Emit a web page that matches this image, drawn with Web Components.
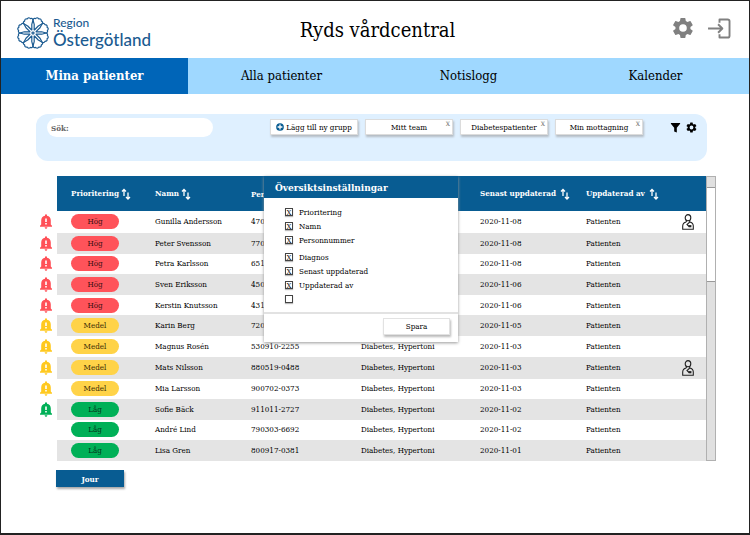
<!DOCTYPE html>
<html lang="sv">
<head>
<meta charset="utf-8">
<title>Ryds vårdcentral</title>
<style>
  html, body { margin: 0; min-height: 100%; }
  body {
    font-family: "DejaVu Serif Condensed", "DejaVu Serif", serif;
    font-size: 8px;
    color: #000;
    background: #fff;
    --blue: #085c92;
  }
</style>
</head>
<body>
<care-app></care-app>

<script>
const define = (name, html, setup) => {
  const template = document.createElement('template');
  template.innerHTML = html;
  customElements.define(name, class extends HTMLElement {
    constructor() {
      super();
      this.attachShadow({ mode: 'open' }).append(template.content.cloneNode(true));
    }
    connectedCallback() { if (setup) setup(this, this.shadowRoot); }
  });
};

/* Icons, sized by the host's width and height */
const GEAR = '<path fill="currentColor" fill-rule="evenodd" d="M19.4 13a7.5 7.5 0 0 0 0-2l2.1-1.6a.5.5 0 0 0 .1-.7l-2-3.4a.5.5 0 0 0-.6-.2l-2.5 1a7.3 7.3 0 0 0-1.7-1l-.4-2.6a.5.5 0 0 0-.5-.5h-4a.5.5 0 0 0-.5.5L9 5.100a7.300 7.300 0 0 0-1.700 1l-2.500-1a.5.5 0 0 0-.6.2l-2 3.400a.5.5 0 0 0 .1.700L4.500 11a7.500 7.500 0 0 0 0 2l-2.200 1.600a.5.5 0 0 0-.1.700l2 3.400c.1.200.4.300.6.200l2.500-1c.5.400 1.100.7 1.700 1l.4 2.600c0 .3.200.5.500.5h4c.300 0 .5-.2.500-.5l.4-2.600a7.300 7.300 0 0 0 1.700-1l2.500 1c.2.100.5 0 .6-.2l2-3.400a.5.5 0 0 0-.1-.7zM12 15.800a3.800 3.800 0 1 1 0-7.600 3.800 3.800 0 0 1 0 7.600z"/>';
const ICONS = {
  gear: ['1 1 22 22', GEAR],
  exit: ['0 0 24 22', '<g fill="none" stroke="currentColor" stroke-width="2" stroke-linejoin="round"><path d="M12 5V1.500h8.500q2 0 2 2v15q0 2-2 2H12V17"/><path d="M0 11h15M10.500 6.500L15 11l-4.500 4.500"/></g>'],
  filter: ['0 0 10 10', '<path fill="currentColor" d="M.8.800h8.400v.900L6.200 5.200V9.600L3.800 8.600V5.200L.8 1.700z"/>'],
  plus: ['0 0 10 10', '<circle cx="5" cy="5" r="4.800" fill="#085c92"/><path d="M5 2v6M2 5h6" stroke="#fff" stroke-width="1.600"/>'],
  sort: ['0 0 10 12', '<g fill="none" stroke="currentColor" stroke-width="1.300"><path d="M3 8V1.500M1 3.500l2-2 2 2"/><path d="M7 4.500V11M5 9l2 2 2-2"/></g>'],
  bell: ['0 0 12 15', '<path fill="currentColor" fill-rule="evenodd" d="M5 1.300a1 1 0 0 1 2 0v.5c2.400.5 3.800 2.200 3.800 4.700v4l1.200 1.300v.9H0v-.9l1.200-1.300v-4C1.200 4 2.600 2.300 5 1.800zM4.600 13.300h2.800q-.2 1.500-1.400 1.500t-1.400-1.500zM5.200 4.500v3.500h1.600V4.500zM5.200 9v1.500h1.600V9z"/>'],
  doctor: ['0 0 12 16', '<g fill="none" stroke="#222" stroke-width="1.100"><ellipse cx="6" cy="3.700" rx="2.800" ry="3.100"/><path d="M4.300 6.300V8M7.700 6.300V8M4.300 8Q.7 8.800.7 12v3.300h10.600V12q0-3.200-3.600-4L5 10.500l2 2"/></g><path fill="#222" d="M6.600 11.100h2.800v2.200H6.600z"/>']
};
customElements.define('app-icon', class extends HTMLElement {
  connectedCallback() {
    if (this.shadowRoot) return;
    const [box, art] = ICONS[this.getAttribute('name')];
    this.attachShadow({ mode: 'open' }).innerHTML = `
      <style>
        :host { display: inline-block; width: 10px; height: 10px; flex: none; }
        svg { display: block; width: 100%; height: 100%; }
      </style>
      <svg viewBox="${box}" aria-hidden="true">${art}</svg>`;
  }
});

const PETALS = Array.from({ length: 8 }, (_, i) =>
  `<g transform="rotate(${i * 45 + 22.5})"><path d="M0-3L-2.200-8.500L-5-12Q-5.200-14.300-3.200-14.200Q-1.900-16.800 0-15.200Q1.900-16.800 3.200-14.200Q5.200-14.300 5-12L2.200-8.500L0-3"/></g>`).join('');
define('region-logo', `
  <style>
    :host { display: flex; align-items: center; gap: 3px; color: #1b5b91; font-family: Lato, "Open Sans", sans-serif; font-weight: 500; }
    svg { width: 34px; height: 34px; }
    span { display: block; }
    .small { font-size: 12px; line-height: 15px; }
    .big { font-size: 17px; line-height: 20px; }
    .words { margin-top: -1px; }
  </style>
  <svg viewBox="-17 -17 34 34" aria-hidden="true"><g fill="none" stroke="currentColor" stroke-width="1.200" stroke-linejoin="round">${PETALS}<circle r="1"/></g></svg>
  <div class="words"><span class="small">Region</span><span class="big">Östergötland</span></div>`);

define('site-header', `
  <style>
    :host { display: grid; grid-template-columns: 1fr auto 1fr; align-items: center; height: 57px; padding: 0 18px 0 15px; }
    h1 { margin: 0; padding-left: 8px; font-size: 20px; font-weight: 400; line-height: 28px; }
    region-logo { padding-top: 7px; }
    .tools { display: flex; justify-content: flex-end; align-items: center; gap: 14px; color: #808080; }
    button { border: 0; padding: 0; background: none; color: inherit; display: block; }
    .gear { width: 22px; height: 22px; }
    .exit { width: 23px; height: 21px; }
  </style>
  <region-logo></region-logo>
  <h1><slot></slot></h1>
  <div class="tools">
    <button aria-label="Inställningar"><app-icon class="gear" name="gear"></app-icon></button>
    <button aria-label="Logga ut"><app-icon class="exit" name="exit"></app-icon></button>
  </div>`);

define('nav-tab', `
  <style>
    :host { display: block; flex: 1; background: #9fd8ff; font-size: 13px; }
    :host([active]) { background: #0065b8; color: #fff; font-weight: 700; }
    a { display: block; line-height: 36px; text-align: center; color: inherit; text-decoration: none; }
  </style>
  <a href="#"><slot></slot></a>`);

define('main-nav', `<style>:host { display: flex; }</style><slot></slot>`);

define('group-chip', `
  <style>
    :host { display: flex; position: relative; flex: 0 1 88px; height: 16px; background: #fff; border: 1px solid #dcdcdc; box-sizing: border-box; box-shadow: 1px 2px 2px #b4bcc4; }
    button { font: inherit; color: inherit; border: 0; padding: 0; background: none; }
    .main { flex: 1; display: flex; align-items: center; justify-content: center; gap: 2px; white-space: nowrap; }
    .close { position: absolute; top: 0; right: 2px; font: 6px/7px "DejaVu Serif", serif; color: #666; }
    :host([add]) .close { display: none; }
    app-icon { width: 8px; height: 8px; }
    :host(:not([add])) app-icon { display: none; }
  </style>
  <button class="main"><app-icon name="plus"></app-icon><slot></slot></button>
  <button class="close" aria-label="Ta bort">X</button>`);

define('filter-panel', `
  <style>
    :host { display: flex; align-items: flex-start; margin: 20px 42px 0 35px; padding: 4px 10px 4px 11px; height: 39px; border-radius: 12px; background: #dff0ff; }
    label { display: flex; flex: 0 1 166px; box-sizing: border-box; height: 19px; padding: 0 4px; border-radius: 10px; background: #fff; align-items: center; gap: 4px; color: #666; font-weight: 700; }
    input { flex: 1; min-width: 0; border: 0; outline: 0; background: none; font: inherit; }
    .groups { display: flex; flex: 0 1 373px; gap: 7px; margin-left: auto; padding-top: 1px; }
    .tools { display: flex; gap: 5px; margin-left: 27px; padding-top: 4px; }
    button { border: 0; padding: 0; background: none; color: #000; display: block; }
    app-icon { display: block; width: 11px; height: 11px; }
  </style>
  <label>Sök:<input type="search" aria-label="Sök"></label>
  <div class="groups"><slot></slot></div>
  <div class="tools">
    <button aria-label="Filter"><app-icon name="filter"></app-icon></button>
    <button aria-label="Kolumner"><app-icon name="gear"></app-icon></button>
  </div>`);

define('priority-pill', `
  <style>
    :host { display: block; width: 48px; line-height: 15px; border-radius: 8px; text-align: center; background: #ff535a; color: #3a0f10; }
    :host([level="medel"]) { background: #ffd348; color: #3a2c05; }
    :host([level="lag"]) { background: #00b057; color: #04351b; }
  </style>
  <slot></slot>`);

const H = 'Hög', M = 'Medel', L = 'Låg';
const PATIENTS = [
  [H, 'Gunilla Andersson', '470', '', '2020-11-08', 1, 1],
  [H, 'Peter Svensson', '770', '', '2020-11-08', 1, 0],
  [H, 'Petra Karlsson', '651', '', '2020-11-08', 1, 0],
  [H, 'Sven Eriksson', '450', '', '2020-11-06', 1, 0],
  [H, 'Kerstin Knutsson', '431', '', '2020-11-06', 1, 0],
  [M, 'Karin Berg', '720', '', '2020-11-05', 1, 0],
  [M, 'Magnus Rosén', '530910-2255', 'Diabetes, Hypertoni', '2020-11-03', 1, 0],
  [M, 'Mats Nilsson', '880519-0488', 'Diabetes, Hypertoni', '2020-11-03', 1, 1],
  [M, 'Mia Larsson', '900702-0373', 'Diabetes, Hypertoni', '2020-11-03', 1, 0],
  [L, 'Sofie Bäck', '911011-2727', 'Diabetes, Hypertoni', '2020-11-02', 1, 0],
  [L, 'André Lind', '790303-6692', 'Diabetes, Hypertoni', '2020-11-02', 0, 0],
  [L, 'Lisa Gren', '800917-0381', 'Diabetes, Hypertoni', '2020-11-01', 0, 0]
];
const LEVEL = { [H]: ['hog', '#ff5057'], [M]: ['medel', '#ffc91f'], [L]: ['lag', '#00b057'] };

define('patient-table', `
  <style>
    :host { display: block; }
    table { width: 100%; height: 285px; table-layout: fixed; border-collapse: collapse; }
    th { height: 35px; padding: 0; background: var(--blue); color: #fff; text-align: left; white-space: nowrap; }
    th app-icon { width: 10px; height: 12px; margin-left: 2px; vertical-align: middle; }
    th.wide app-icon { margin-left: 4px; }
    th.gutter { background: none; }
    td { padding: 0; white-space: nowrap; }
    tbody tr:nth-child(even) td:not(.gutter) { background: #e4e4e4; }
    .first { padding-left: 14px; }
    td app-icon { display: block; width: 12px; height: 16px; }
    td.gutter app-icon { height: 15px; margin-left: 2px; }
  </style>
  <table>
    <colgroup><col style="width:19px"><col style="width:98px"><col style="width:96px"><col style="width:110px"><col style="width:119px"><col style="width:106px"><col style="width:96px"><col style="width:24px"></colgroup>
    <thead><tr>
      <th class="gutter"></th>
      <th class="first">Prioritering<app-icon name="sort"></app-icon></th>
      <th>Namn<app-icon name="sort"></app-icon></th>
      <th>Per</th><th></th>
      <th class="wide">Senast uppdaterad<app-icon name="sort"></app-icon></th>
      <th class="wide">Uppdaterad av<app-icon name="sort"></app-icon></th>
      <th></th>
    </tr></thead>
    <tbody></tbody>
  </table>`, (host, root) => {
  root.querySelector('tbody').innerHTML = PATIENTS.map(([prio, name, number, diagnosis, date, alarm, doctor]) => `
    <tr>
      <td class="gutter">${alarm ? `<app-icon name="bell" style="color:${LEVEL[prio][1]}"></app-icon>` : ''}</td>
      <td class="first"><priority-pill level="${LEVEL[prio][0]}">${prio}</priority-pill></td>
      <td>${name}</td><td>${number}</td><td>${diagnosis}</td><td>${date}</td><td>Patienten</td>
      <td>${doctor ? '<app-icon name="doctor"></app-icon>' : ''}</td>
    </tr>`).join('');
});

define('scroll-rail', `
  <style>
    :host { display: flex; flex-direction: column; width: 10px; box-sizing: border-box; border: 1px solid #b0b0b0; background: #e0e0e0; }
    .cap { height: 10px; border-bottom: 1px solid #999; }
    .thumb { height: 93px; background: #fff; border-bottom: 1px solid #999; }
  </style>
  <div class="cap"></div><div class="thumb"></div>`);

define('check-row', `
  <style>
    :host { display: block; }
    label { display: flex; align-items: center; gap: 6px; height: 14px; }
    input { appearance: none; width: 8px; height: 8px; margin: 0; border: 1px solid #444; background: #fff; display: grid; place-items: center; box-shadow: 0 1px 1px #bbb; }
    input:checked::before { content: "X"; font: 7px/8px "DejaVu Serif", serif; color: #000; }
  </style>
  <label><input type="checkbox"><slot></slot></label>`, (host, root) => {
  const box = root.querySelector('input');
  box.checked = host.hasAttribute('checked');
  if (!host.textContent) box.setAttribute('aria-label', 'Tom kolumn');
});

define('settings-dialog', `
  <style>
    :host { display: block; background: #fff; box-shadow: 0 1px 3px #999; }
    h2 { margin: 0; padding: 1px 11px 0; font-size: 10px; line-height: 21px; background: var(--blue); color: #fff; }
    .body { padding: 7px 21px 6px; }
    .footer { display: flex; justify-content: flex-end; padding: 4px 8px 7px; border-top: 2px solid #e2e2e2; }
    button { font: inherit; color: inherit; width: 67px; height: 17px; padding: 0; background: #fff; border: 1px solid #e2e2e2; box-shadow: 1px 2px 2px #bbb; }
  </style>
  <h2>Översiktsinställningar</h2>
  <div class="body"><slot></slot></div>
  <div class="footer"><button>Spara</button></div>`);

define('care-app', `
  <style>
    :host { display: flex; flex-direction: column; min-height: 100vh; box-sizing: border-box; border: 1px solid #222; border-bottom-width: 2px; }
    main { position: relative; display: flex; margin: 15px 33px 0 37px; }
    patient-table { flex: 1; }
    settings-dialog { position: absolute; top: 0; left: 226px; width: 194px; }
    .gap { margin-top: 3px; }
    .jour { align-self: flex-start; width: 68px; height: 17px; margin: 9px 0 0 55px; padding: 0; border: 0; background: var(--blue); color: #fff; font: inherit; font-weight: 700; box-shadow: 1px 2px 2px #aaa; }
  </style>
  <site-header>Ryds vårdcentral</site-header>
  <main-nav>
    <nav-tab active>Mina patienter</nav-tab>
    <nav-tab>Alla patienter</nav-tab>
    <nav-tab>Notislogg</nav-tab>
    <nav-tab>Kalender</nav-tab>
  </main-nav>
  <filter-panel>
    <group-chip add>Lägg till ny grupp</group-chip>
    <group-chip>Mitt team</group-chip>
    <group-chip>Diabetespatienter</group-chip>
    <group-chip>Min mottagning</group-chip>
  </filter-panel>
  <main>
    <patient-table></patient-table>
    <scroll-rail></scroll-rail>
    <settings-dialog role="dialog" aria-label="Översiktsinställningar">
      <check-row checked>Prioritering</check-row>
      <check-row checked>Namn</check-row>
      <check-row checked>Personnummer</check-row>
      <check-row class="gap" checked>Diagnos</check-row>
      <check-row checked>Senast uppdaterad</check-row>
      <check-row checked>Uppdaterad av</check-row>
      <check-row></check-row>
    </settings-dialog>
  </main>
  <button class="jour">Jour</button>`);
</script>
</body>
</html>
